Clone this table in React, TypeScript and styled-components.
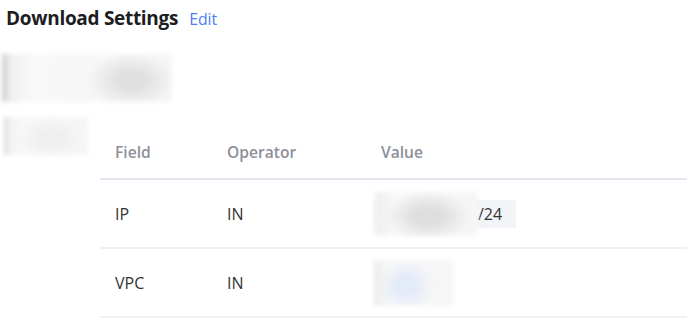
import React from "react";
import styled, { createGlobalStyle } from "styled-components";

const Global = createGlobalStyle`
  html, body { margin: 0; padding: 0; background: #ffffff; }
  body { font-family: "Open Sans", "Noto Sans", "Liberation Sans", sans-serif; color: #333; }
`;

const Page = styled.div`
  width: 687px;
  height: 319px;
  overflow: hidden;
  display: flex;
  flex-direction: column;
`;

const TitleRow = styled.div`
  display: flex;
  align-items: baseline;
  gap: 11px;
  padding: 5px 0 0 6px;
  height: 32px;
`;

const Title = styled.h2`
  margin: 0;
  font-size: 19px;
  font-weight: 700;
  color: #1d1d1f;
  letter-spacing: -0.3px;
  line-height: 26px;
`;

const EditLink = styled.a`
  font-size: 15.8px;
  color: #4c7df5;
  text-decoration: none;
  cursor: pointer;
`;

/* Masked placeholder for concealed values */
const Masked = styled.div<{ $w: number; $h: number; $blobX: number; $blobW: number; $tint: string; $edge: string }>`
  width: ${(p) => p.$w}px;
  height: ${(p) => p.$h}px;
  flex: none;
  background:
    radial-gradient(ellipse ${(p) => p.$blobW}% 58% at ${(p) => p.$blobX}% 55%,
      ${(p) => p.$tint} 0%, ${(p) => p.$tint} 30%, rgba(246,246,246,0) 100%),
    linear-gradient(90deg, ${(p) => p.$edge} 0%, #efefef 5%, #f8f8f8 18%, #f6f6f6 100%);
  filter: blur(2px);
`;

const SecretRow = styled.div`
  display: flex;
  padding: 17px 0 0 2px;
`;

const Body = styled.div`
  display: flex;
  align-items: flex-start;
  padding: 15px 0 0 4px;
`;

const Table = styled.div`
  flex: 1;
  margin-left: 12px;
  margin-top: 9px;
  display: flex;
  flex-direction: column;
`;

const Row = styled.div<{ $head?: boolean }>`
  display: grid;
  grid-template-columns: 112px 154px 1fr;
  align-items: center;
  height: ${(p) => (p.$head ? 52 : 67)}px;
  border-bottom: 2px solid ${(p) => (p.$head ? "#e2e6ee" : "#eef0f4")};
`;

const Cell = styled.div<{ $head?: boolean }>`
  padding-left: 15px;
  font-size: ${(p) => (p.$head ? 15.6 : 16)}px;
  font-weight: ${(p) => (p.$head ? 600 : 400)};
  color: ${(p) => (p.$head ? "#8d9099" : "#333")};
`;

const ValueCell = styled.div`
  padding-left: 8px;
  display: flex;
  align-items: center;
`;

const Tag = styled.div`
  display: flex;
  align-items: center;
  height: 28px;
  background: #f2f4f8;
  font-size: 16px;
  color: #333;
  padding-right: 14px;
`;

export default function App() {
  return (
    <Page>
      <Global />
      <TitleRow>
        <Title>Download Settings</Title>
        <EditLink>Edit</EditLink>
      </TitleRow>
      <SecretRow>
        <Masked $w={170} $h={48} $blobX={76} $blobW={26} $tint="#e0e0e0" $edge="#cccccc" />
      </SecretRow>
      <Body>
        <Masked $w={84} $h={38} $blobX={55} $blobW={40} $tint="#efefef" $edge="#d6d6d6" />
        <Table>
          <Row $head>
            <Cell $head>Field</Cell>
            <Cell $head>Operator</Cell>
            <Cell $head>Value</Cell>
          </Row>
          <Row>
            <Cell>IP</Cell>
            <Cell>IN</Cell>
            <ValueCell>
              <Tag>
                <Masked $w={104} $h={44} $blobX={52} $blobW={42} $tint="#dedede" $edge="#f2f2f2" />
                <span>/24</span>
              </Tag>
            </ValueCell>
          </Row>
          <Row>
            <Cell>VPC</Cell>
            <Cell>IN</Cell>
            <ValueCell>
              <Masked $w={80} $h={46} $blobX={40} $blobW={36} $tint="#e3eaf8" $edge="#ececec" />
            </ValueCell>
          </Row>
        </Table>
      </Body>
    </Page>
  );
}
